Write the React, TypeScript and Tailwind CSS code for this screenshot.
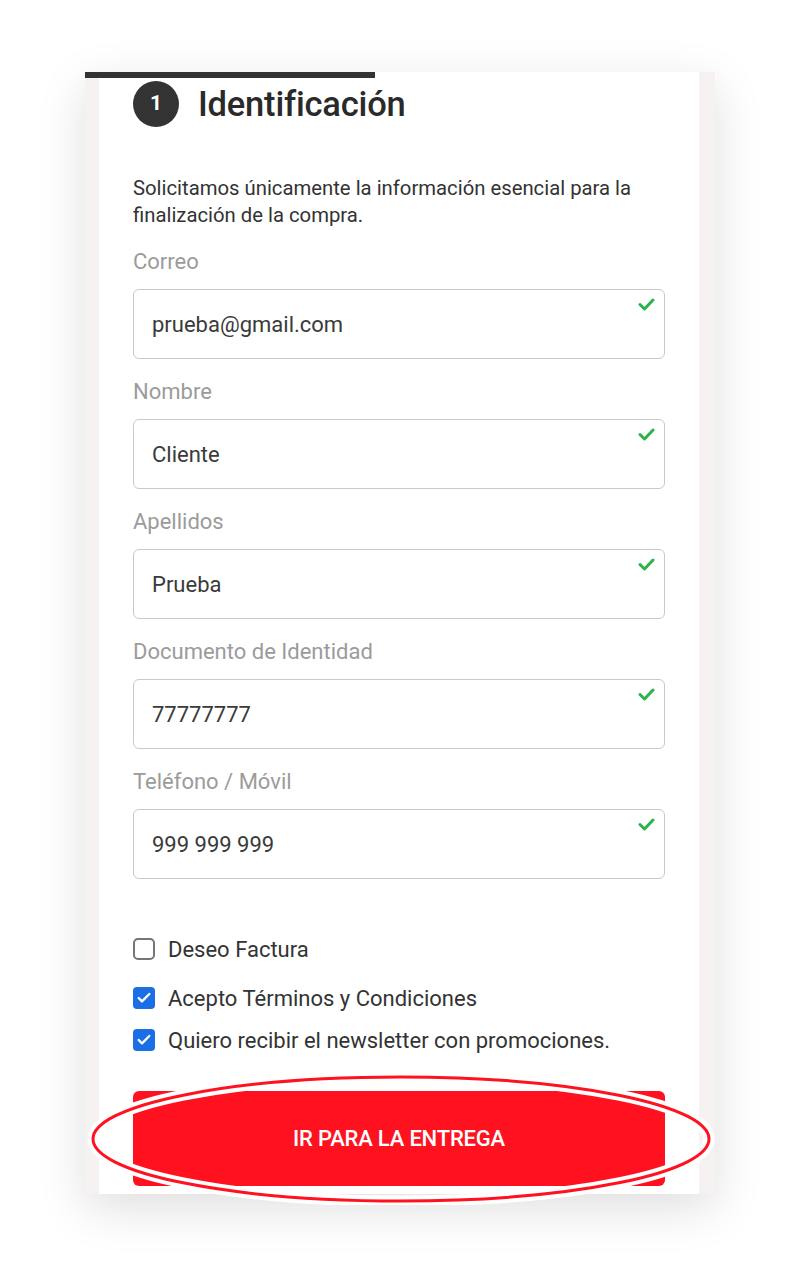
import { Check } from 'lucide-react'

const fields = [
  { label: 'Correo', value: 'prueba@gmail.com' },
  { label: 'Nombre', value: 'Cliente' },
  { label: 'Apellidos', value: 'Prueba' },
  { label: 'Documento de Identidad', value: '77777777' },
  { label: 'Teléfono / Móvil', value: '999 999 999' },
]

function Field({ label, value }: { label: string; value: string }) {
  return (
    <div className="flex flex-col">
      <label className="text-[22px] leading-[26px] text-[#9b9b9b]">{label}</label>
      <div className="relative mt-[14px] h-[70px] rounded-[6px] border border-[#c9c9c9] flex items-center px-[18px]">
        <span className="text-[22px] text-[#3a3a3a]">{value}</span>
        {/* valid tick */}
        <svg
          className="absolute right-[9px] top-[8px]"
          width="17"
          height="13"
          viewBox="0 0 17 13"
        >
          <path
            d="M2 6.5 L6.5 11 L15 2"
            fill="none"
            stroke="#2db34a"
            strokeWidth="3"
            strokeLinecap="round"
            strokeLinejoin="round"
          />
        </svg>
      </div>
    </div>
  )
}

function CheckRow({ label, checked }: { label: string; checked: boolean }) {
  return (
    <div className="flex items-center gap-[13px] h-[24px]">
      {checked ? (
        <div className="w-[22px] h-[22px] rounded-[4px] bg-[#1a6fe6] grid place-content-center">
          <Check size={16} strokeWidth={3.5} color="#fff" />
        </div>
      ) : (
        <div className="w-[22px] h-[22px] rounded-[5px] border-2 border-[#767676] bg-white" />
      )}
      <span className="text-[22px] text-[#333]">{label}</span>
    </div>
  )
}

export default function App() {
  return (
    <div className="w-[800px] h-[1275px] bg-white pt-[72px] pl-[85px] font-['Roboto',sans-serif]">
      <div className="relative w-[630px] bg-[#f6f2f2] pl-[14px] pr-[16px] shadow-[0_14px_45px_rgba(0,0,0,0.13)]">
        {/* progress bar */}
        <div className="absolute left-0 top-0 w-[290px] h-[6px] bg-[#333]" />

        <div className="bg-white px-[34px] pt-[9px] pb-[8px] flex flex-col">
          {/* Header */}
          <div className="flex items-center gap-[19px] h-[46px]">
            <div className="w-[46px] h-[46px] rounded-full bg-[#333] grid place-content-center text-white text-[21px] font-bold">
              1
            </div>
            <h2 className="text-[34.5px] leading-[46px] font-medium text-[#2a2a2a] tracking-[-0.2px]">Identificación</h2>
          </div>

          <p className="mt-[48px] text-[20.3px] leading-[27px] text-[#333]">
            Solicitamos únicamente la información esencial para la finalización de la compra.
          </p>

          <div className="mt-[20px] flex flex-col gap-[20px]">
            {fields.map((f) => (
              <Field key={f.label} label={f.label} value={f.value} />
            ))}
          </div>

          <div className="mt-[58px] flex flex-col">
            <CheckRow label="Deseo Factura" checked={false} />
            <div className="mt-[25px]">
              <CheckRow label="Acepto Términos y Condiciones" checked />
            </div>
            <div className="mt-[18px]">
              <CheckRow label="Quiero recibir el newsletter con promociones." checked />
            </div>
          </div>

          {/* Submit */}
          <div className="relative mt-[39px]">
            <button className="w-full h-[95px] rounded-[6px] bg-[#ff111f] text-white text-[22px] font-medium tracking-[-0.2px]">
              IR PARA LA ENTREGA
            </button>
            <svg
              className="absolute left-[-46px] top-[-18px] pointer-events-none"
              width="628"
              height="132"
              viewBox="0 0 628 132"
            >
              <ellipse cx="314" cy="66" rx="308" ry="62" fill="none" stroke="#fff" strokeWidth="11" />
              <ellipse cx="314" cy="66" rx="308" ry="62" fill="none" stroke="#ff111f" strokeWidth="3" />
            </svg>
          </div>
        </div>
      </div>
    </div>
  )
}
